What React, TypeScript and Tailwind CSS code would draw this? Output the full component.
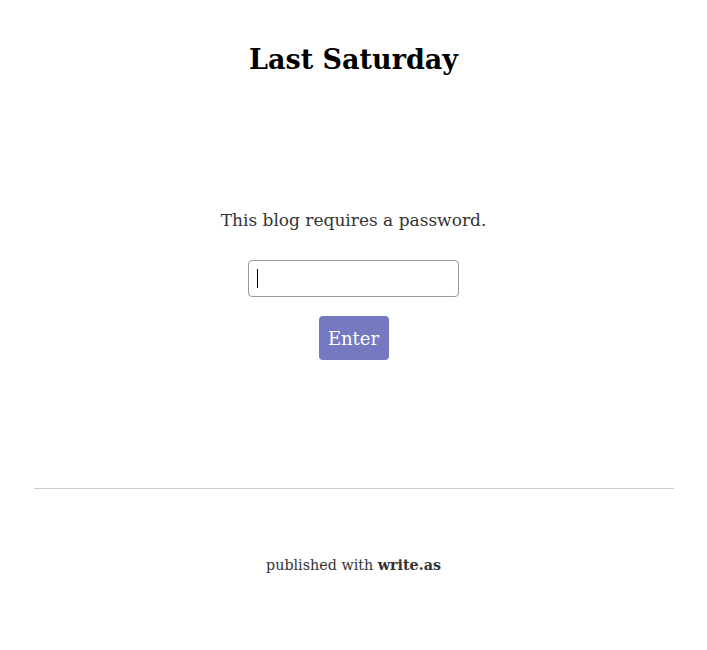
import React from "react";

const App = () => {
  return (
    <div className="min-h-screen bg-white text-[#333] font-['DejaVu_Serif',serif]">
      <header className="pt-[40px] text-center">
        <h1 className="text-[27px] font-bold leading-[40px] text-black">Last Saturday</h1>
      </header>

      <div className="mt-[125px] flex flex-col items-center">
        <p className="text-[17px] leading-[30px]">This blog requires a password.</p>
        <form className="mt-[25px] flex flex-col items-center" onSubmit={(e) => e.preventDefault()}>
          <div className="relative">
            <input
              type="password"
              className="block h-[37px] w-[211px] rounded-[4px] border border-[#999] px-2 text-[16px] outline-none"
            />
            {/* caret of the focused field */}
            <span className="pointer-events-none absolute left-[9px] top-[9px] h-[19px] w-px bg-black" />
          </div>
          <button
            type="submit"
            className="mt-[19px] h-[44px] w-[70px] rounded-[4px] bg-[#7479c0] text-[18px] text-white"
          >
            Enter
          </button>
        </form>
      </div>

      <footer className="mx-auto mt-[128px] w-[640px]">
        <hr className="border-t border-[#ccc]" />
        <p className="mt-[64px] text-center text-[14.3px] leading-[24px]">
          published with <b className="font-bold">write.as</b>
        </p>
      </footer>
    </div>
  );
};

export default App;
